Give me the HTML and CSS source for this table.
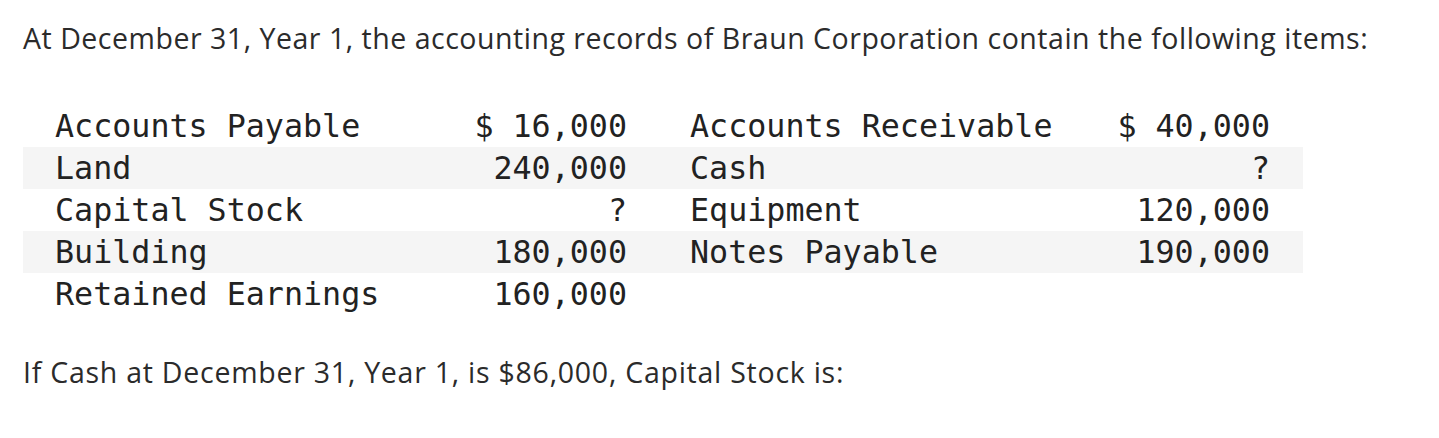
FILE: index.html
```html
<!DOCTYPE html>
<html>
<head>
<meta charset="utf-8">
<link rel="stylesheet" href="styles.css">
</head>
<body>
<div class="page">
  <p class="intro">At December 31, Year 1, the accounting records of Braun Corporation contain the following items:</p>
  <table class="items">
    <colgroup>
      <col class="c-label1">
      <col class="c-value1">
      <col class="c-label2">
      <col class="c-value2">
    </colgroup>
    <tbody>
      <tr><td class="l1">Accounts Payable</td><td class="v1">$ 16,000</td><td class="l2">Accounts Receivable</td><td class="v2">$ 40,000</td></tr>
      <tr><td class="l1">Land</td><td class="v1">240,000</td><td class="l2">Cash</td><td class="v2">?</td></tr>
      <tr><td class="l1">Capital Stock</td><td class="v1">?</td><td class="l2">Equipment</td><td class="v2">120,000</td></tr>
      <tr><td class="l1">Building</td><td class="v1">180,000</td><td class="l2">Notes Payable</td><td class="v2">190,000</td></tr>
      <tr><td class="l1">Retained Earnings</td><td class="v1">160,000</td><td class="l2"></td><td class="v2"></td></tr>
    </tbody>
  </table>
  <p class="question">If Cash at December 31, Year 1, is $86,000, Capital Stock is:</p>
</div>
</body>
</html>
```

FILE: styles.css
```css
html, body {
  margin: 0;
  padding: 0;
  background: #ffffff;
}

.page {
  padding: 18px 0 0 23px;
  color: #2b2b2b;
  font-family: "Open Sans", "Liberation Sans", sans-serif;
}

.intro {
  margin: 0;
  font-size: 28.5px;
  line-height: 40px;
  letter-spacing: 0.52px;
}

.items {
  margin-top: 47px;
  border-collapse: collapse;
  border-spacing: 0;
  table-layout: fixed;
  width: 1280px;
  font-family: "DejaVu Sans Mono", monospace;
  font-size: 31.7px;
  color: #222222;
}

.c-label1 { width: 417px; }
.c-value1 { width: 187px; }
.c-label2 { width: 473px; }
.c-value2 { width: 203px; }

.items td {
  padding: 0;
  height: 42px;
  line-height: 42px;
  white-space: nowrap;
}

.items tr:nth-child(even) td {
  background: #f5f5f5;
}

.items .l1 { padding-left: 32px; }
.items .v1 { text-align: right; }
.items .l2 { padding-left: 63px; }
.items .v2 { text-align: right; padding-right: 33px; }

.question {
  margin: 37px 0 0;
  font-size: 28.5px;
  line-height: 40px;
  letter-spacing: 0.75px;
}
```
